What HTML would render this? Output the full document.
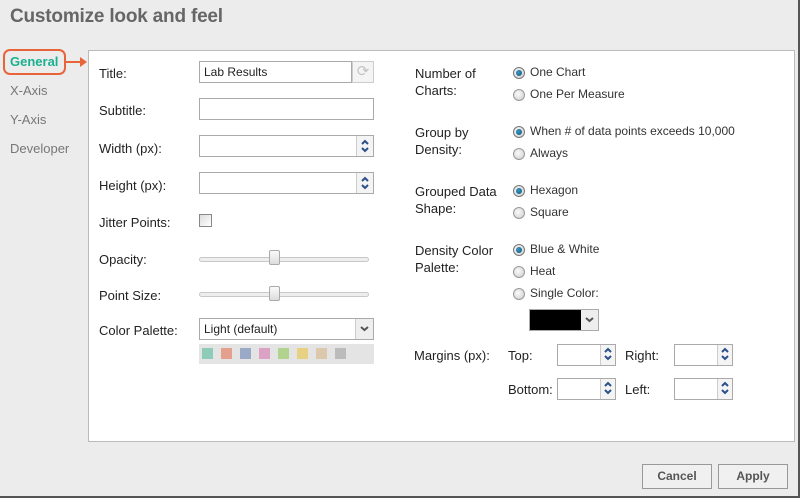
<!DOCTYPE html>
<html><head><meta charset="utf-8"><style>
*{margin:0;padding:0;box-sizing:border-box}
body{width:800px;height:498px;overflow:hidden;background:#ececec;font-family:"Liberation Sans",sans-serif;color:#222;position:relative}
.a{position:absolute}
.frame{left:0;top:0;width:800px;height:498px;border-right:2px solid #555;border-bottom:2px solid #555}
h1{position:absolute;left:10px;top:6px;font-size:19px;color:#666;font-weight:bold;letter-spacing:-0.2px}
.nav{font-size:13px;color:#777;left:10px}
.panel{left:88px;top:50px;width:707px;height:392px;background:#fff;border:1px solid #bbb}
.lbl{font-size:13px;color:#222;line-height:17px}
.in{height:22px;border:1px solid #aaa;background:#fff;font-size:12px;padding:3px 4px}
.spin{position:absolute;right:0;top:0;width:17px;height:100%;border-left:1px solid #ccc;background:#f4f4f4}
.spin svg{display:block}
.r{font-size:12px;color:#333;line-height:14px}
.rad{position:absolute;width:12px;height:12px;border-radius:50%;border:1px solid #999;background:radial-gradient(circle at 40% 40%,#fafafa,#ccc)}
.rad.on{border-color:#777}
.rad.on::after{content:"";position:absolute;left:2px;top:2px;width:6px;height:6px;border-radius:50%;background:radial-gradient(circle at 40% 40%,#3a9ac8,#0b4f75)}
.track{height:5px;border:1px solid #c8c8c8;border-radius:3px;background:#eee}
.thumb{width:11px;height:15px;border:1px solid #aaa;border-radius:2px;background:linear-gradient(#fafafa,#ddd)}
.btn{height:25px;border:1px solid #999;background:#f0f0f0;font-size:12px;font-weight:bold;color:#555;text-align:center;line-height:23px}
</style></head><body>
<div class="a frame"></div>
<h1>Customize look and feel</h1>
<div class="a" style="left:3px;top:49px;width:63px;height:26px;border:2px solid #e8643a;border-radius:7px"></div>
<div class="a nav" style="top:54px;color:#1bb08f;font-weight:bold">General</div>
<div class="a" style="left:66px;top:61px;width:16px;height:2px;background:#e8643a"></div>
<div class="a" style="left:80px;top:57px;width:0;height:0;border-left:7px solid #e8643a;border-top:5px solid transparent;border-bottom:5px solid transparent"></div>
<div class="a nav" style="top:83px">X-Axis</div>
<div class="a nav" style="top:112px">Y-Axis</div>
<div class="a nav" style="top:141px">Developer</div>
<div class="a panel"></div>

<div class="a lbl" style="left:99px;top:65px">Title:</div>
<div class="a in" style="left:199px;top:61px;width:153px">Lab Results</div>
<div class="a" style="left:352px;top:61px;width:22px;height:22px;border:1px solid #ccc;background:#f4f4f4;color:#c4c4c4;font-size:15px;text-align:center;line-height:20px">⟳</div>
<div class="a lbl" style="left:99px;top:102px">Subtitle:</div>
<div class="a in" style="left:199px;top:98px;width:175px"></div>
<div class="a lbl" style="left:99px;top:140px">Width (px):</div>
<div class="a in" style="left:199px;top:135px;width:175px"><div class="spin"><svg width="16" height="20"><path d="M5 8l3-3 3 3M5 12l3 3 3-3" stroke="#2a4f8a" stroke-width="2" fill="none"/></svg></div></div>
<div class="a lbl" style="left:99px;top:177px">Height (px):</div>
<div class="a in" style="left:199px;top:172px;width:175px"><div class="spin"><svg width="16" height="20"><path d="M5 8l3-3 3 3M5 12l3 3 3-3" stroke="#2a4f8a" stroke-width="2" fill="none"/></svg></div></div>
<div class="a lbl" style="left:99px;top:214px">Jitter Points:</div>
<div class="a" style="left:199px;top:214px;width:13px;height:13px;border:1px solid #888;background:linear-gradient(135deg,#ddd,#fff)"></div>
<div class="a lbl" style="left:99px;top:251px">Opacity:</div>
<div class="a track" style="left:199px;top:257px;width:170px"></div>
<div class="a thumb" style="left:269px;top:250px"></div>
<div class="a lbl" style="left:99px;top:287px">Point Size:</div>
<div class="a track" style="left:199px;top:292px;width:170px"></div>
<div class="a thumb" style="left:269px;top:286px"></div>
<div class="a lbl" style="left:99px;top:322px">Color Palette:</div>
<div class="a in" style="left:199px;top:318px;width:175px">Light (default)<div class="spin" style="width:18px;background:#eee"><svg width="17" height="20"><path d="M5 8l3.5 3 3.5-3" stroke="#555" stroke-width="2" fill="none"/></svg></div></div>
<div class="a" style="left:199px;top:344px;width:175px;height:20px;background:#e4e4e4"></div>
<div class="a" style="left:202px;top:348px;display:flex;gap:8px">
<i style="width:11px;height:11px;background:#8fcbb9"></i><i style="width:11px;height:11px;background:#e4a08c"></i><i style="width:11px;height:11px;background:#9aa9c8"></i><i style="width:11px;height:11px;background:#dca2c6"></i><i style="width:11px;height:11px;background:#b2d38e"></i><i style="width:11px;height:11px;background:#e9d183"></i><i style="width:11px;height:11px;background:#dcc8ac"></i><i style="width:11px;height:11px;background:#bbb"></i></div>

<div class="a lbl" style="left:415px;top:65px">Number of<br>Charts:</div>
<div class="a rad on" style="left:513px;top:67px"></div><div class="a r" style="left:530px;top:65px">One Chart</div>
<div class="a rad" style="left:513px;top:89px"></div><div class="a r" style="left:530px;top:87px">One Per Measure</div>
<div class="a lbl" style="left:415px;top:124px">Group by<br>Density:</div>
<div class="a rad on" style="left:513px;top:126px"></div><div class="a r" style="left:530px;top:124px">When # of data points exceeds 10,000</div>
<div class="a rad" style="left:513px;top:148px"></div><div class="a r" style="left:530px;top:146px">Always</div>
<div class="a lbl" style="left:415px;top:183px">Grouped Data<br>Shape:</div>
<div class="a rad on" style="left:513px;top:185px"></div><div class="a r" style="left:530px;top:183px">Hexagon</div>
<div class="a rad" style="left:513px;top:207px"></div><div class="a r" style="left:530px;top:205px">Square</div>
<div class="a lbl" style="left:415px;top:242px">Density Color<br>Palette:</div>
<div class="a rad on" style="left:513px;top:244px"></div><div class="a r" style="left:530px;top:242px">Blue &amp; White</div>
<div class="a rad" style="left:513px;top:266px"></div><div class="a r" style="left:530px;top:264px">Heat</div>
<div class="a rad" style="left:513px;top:288px"></div><div class="a r" style="left:530px;top:286px">Single Color:</div>
<div class="a" style="left:529px;top:309px;width:70px;height:22px;border:1px solid #aaa;background:#000"><div style="position:absolute;right:0;top:0;width:17px;height:20px;background:#eee"><svg width="17" height="20"><path d="M5 8l3.5 3 3.5-3" stroke="#555" stroke-width="2" fill="none"/></svg></div></div>

<div class="a lbl" style="left:414px;top:347px">Margins (px):</div>
<div class="a lbl" style="left:508px;top:347px">Top:</div>
<div class="a in" style="left:557px;top:344px;width:59px"><div class="spin" style="width:15px"><svg width="14" height="18"><path d="M4 7l3-3 3 3M4 11l3 3 3-3" stroke="#2a4f8a" stroke-width="2" fill="none"/></svg></div></div>
<div class="a lbl" style="left:625px;top:347px">Right:</div>
<div class="a in" style="left:674px;top:344px;width:59px"><div class="spin" style="width:15px"><svg width="14" height="18"><path d="M4 7l3-3 3 3M4 11l3 3 3-3" stroke="#2a4f8a" stroke-width="2" fill="none"/></svg></div></div>
<div class="a lbl" style="left:508px;top:381px">Bottom:</div>
<div class="a in" style="left:557px;top:378px;width:59px"><div class="spin" style="width:15px"><svg width="14" height="18"><path d="M4 7l3-3 3 3M4 11l3 3 3-3" stroke="#2a4f8a" stroke-width="2" fill="none"/></svg></div></div>
<div class="a lbl" style="left:625px;top:381px">Left:</div>
<div class="a in" style="left:674px;top:378px;width:59px"><div class="spin" style="width:15px"><svg width="14" height="18"><path d="M4 7l3-3 3 3M4 11l3 3 3-3" stroke="#2a4f8a" stroke-width="2" fill="none"/></svg></div></div>

<div class="a btn" style="left:642px;top:464px;width:70px">Cancel</div>
<div class="a btn" style="left:718px;top:464px;width:70px">Apply</div>
</body></html>
